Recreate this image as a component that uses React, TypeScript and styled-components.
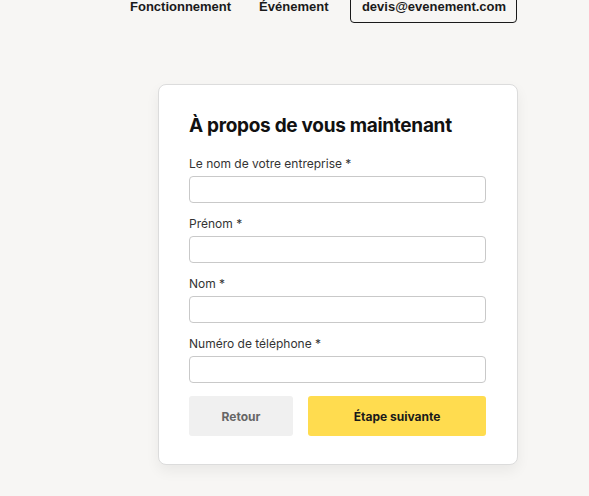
import React from 'react'
import styled, { createGlobalStyle } from 'styled-components'

const GlobalStyle = createGlobalStyle`
  html, body {
    margin: 0;
    padding: 0;
    background: #f7f6f4;
  }
  body {
    font-family: Inter, 'Liberation Sans', Arial, sans-serif;
    color: #111;
  }
`

const Page = styled.div`
  width: 589px;
  height: 496px;
  overflow: hidden;
  background: #f7f6f4;
`

const Header = styled.header`
  display: flex;
  align-items: center;
  margin-top: -11px;
  padding-left: 130px;
  height: 34px;
`

const NavLink = styled.a`
  font-family: 'Liberation Sans', Arial, sans-serif;
  font-weight: 700;
  font-size: 13px;
  color: #1a1a1a;
  text-decoration: none;
  margin-right: 28px;
`

const MailButton = styled.a`
  display: flex;
  align-items: center;
  justify-content: center;
  box-sizing: border-box;
  width: 167px;
  height: 34px;
  margin-left: -6px;
  border: 1px solid #1a1a1a;
  border-radius: 4px;
  font-family: 'Liberation Sans', Arial, sans-serif;
  font-weight: 700;
  font-size: 13px;
  color: #1a1a1a;
  text-decoration: none;
`

const Main = styled.main`
  padding: 61px 0 0 158px;
`

const Card = styled.section`
  box-sizing: border-box;
  width: 360px;
  height: 381px;
  background: #fff;
  border: 1px solid #dcdcdc;
  border-radius: 8px;
  box-shadow: 0 6px 14px rgba(0, 0, 0, 0.06);
  padding: 26px 30px 0 30px;
`

const Title = styled.h1`
  margin: 0 0 15px 0;
  font-size: 19px;
  font-weight: 700;
  letter-spacing: -0.3px;
  line-height: 30px;
  color: #111;
`

const Field = styled.div`
  display: flex;
  flex-direction: column;
  margin-bottom: 13px;
`

const Label = styled.label`
  font-size: 12px;
  color: #333;
  line-height: 16px;
  margin-bottom: 4px;
`

const Input = styled.input`
  box-sizing: border-box;
  width: 297px;
  height: 27px;
  border: 1px solid #c9c9c9;
  border-radius: 4px;
  background: #fff;
  outline: none;
  padding: 0 8px;
  font: inherit;
`

const Actions = styled.div`
  display: flex;
  gap: 15px;
  margin-top: 3px;
`

const Button = styled.button<{ primary?: boolean }>`
  height: 40px;
  border: none;
  border-radius: 3px;
  font-family: Inter, 'Liberation Sans', Arial, sans-serif;
  font-weight: 700;
  font-size: 12px;
  cursor: pointer;
  width: ${({ primary }) => (primary ? '178px' : '104px')};
  background: ${({ primary }) => (primary ? '#ffdc4f' : '#f0f0f0')};
  color: ${({ primary }) => (primary ? '#1a1a1a' : '#666')};
`

const fields = [
  'Le nom de votre entreprise *',
  'Prénom *',
  'Nom *',
  'Numéro de téléphone *'
]

const App: React.FC = () => (
  <>
    <GlobalStyle />
    <Page>
      <Header>
        <NavLink href="#">Fonctionnement</NavLink>
        <NavLink href="#">Événement</NavLink>
        <MailButton href="#">devis@evenement.com</MailButton>
      </Header>
      <Main>
        <Card>
          <Title>À propos de vous maintenant</Title>
          {fields.map((label) => (
            <Field key={label}>
              <Label>{label}</Label>
              <Input type="text" />
            </Field>
          ))}
          <Actions>
            <Button>Retour</Button>
            <Button primary>Étape suivante</Button>
          </Actions>
        </Card>
      </Main>
    </Page>
  </>
)

export default App
